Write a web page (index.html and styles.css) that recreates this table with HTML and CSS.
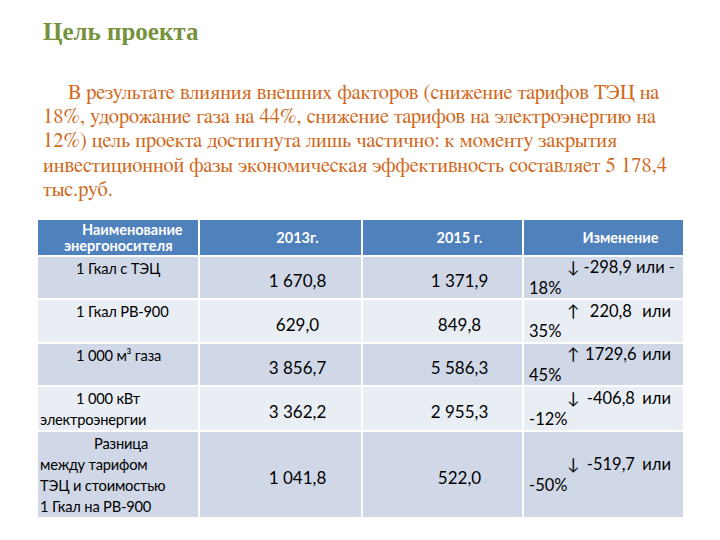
FILE: index.html
```html
<!DOCTYPE html>
<html>
<head>
<meta charset="utf-8">
<link rel="stylesheet" href="styles.css">
</head>
<body>
<div class="slide">
  <h1 class="title">Цель проекта</h1>
  <p class="lead">В результате влияния внешних факторов (снижение тарифов ТЭЦ на<br>18%, удорожание газа на 44%, снижение тарифов на электроэнергию на<br>12%) цель проекта достигнута лишь частично: к моменту закрытия<br>инвестиционной фазы экономическая эффективность составляет 5&nbsp;178,4<br>тыс.руб.</p>
  <table class="data">
    <colgroup>
      <col class="c1"><col class="c2"><col class="c3"><col class="c4">
    </colgroup>
    <thead>
      <tr class="hr">
        <th class="name"><span class="h1">Наименование</span><span class="h2">энергоносителя</span></th>
        <th>2013г.</th>
        <th>2015 г.</th>
        <th>Изменение</th>
      </tr>
    </thead>
    <tbody>
      <tr class="r1 odd">
        <td class="name">1 Гкал с ТЭЦ</td>
        <td class="num">1 670,8</td>
        <td class="num">1 371,9</td>
        <td class="chg"><span class="l1">↓ -298,9 или -</span><span class="l2">18%</span></td>
      </tr>
      <tr class="r2 even">
        <td class="name">1 Гкал РВ-900</td>
        <td class="num">629,0</td>
        <td class="num">849,8</td>
        <td class="chg"><span class="l1">↑ 220,8 или</span><span class="l2">35%</span></td>
      </tr>
      <tr class="r3 odd">
        <td class="name">1 000 м³ газа</td>
        <td class="num">3 856,7</td>
        <td class="num">5 586,3</td>
        <td class="chg"><span class="l1">↑ 1729,6 или</span><span class="l2">45%</span></td>
      </tr>
      <tr class="r4 even">
        <td class="name">1 000 кВт<br>электроэнергии</td>
        <td class="num">3 362,2</td>
        <td class="num">2 955,3</td>
        <td class="chg"><span class="l1">↓ -406,8 или</span><span class="l2">-12%</span></td>
      </tr>
      <tr class="r5 odd">
        <td class="name wide">Разница<br>между тарифом<br>ТЭЦ и стоимостью<br>1 Гкал на РВ-900</td>
        <td class="num">1 041,8</td>
        <td class="num">522,0</td>
        <td class="chg"><span class="l1">↓ -519,7 или</span><span class="l2">-50%</span></td>
      </tr>
    </tbody>
  </table>
</div>
</body>
</html>
```

FILE: styles.css
```css
html, body {
  margin: 0;
  padding: 0;
  background: #ffffff;
}

.slide {
  width: 720px;
  height: 540px;
  padding: 0 0 0 36px;
  box-sizing: border-box;
}

.title {
  margin: 0;
  padding: 18px 0 0 7px;
  font-family: "Liberation Serif", serif;
  font-weight: bold;
  font-size: 25px;
  line-height: 28px;
  color: #76923c;
}

.lead {
  margin: 35px 0 0 7px;
  width: 660px;
  font-family: FreeSerif, "Liberation Serif", serif;
  font-size: 20.5px;
  line-height: 24.2px;
  text-indent: 25px;
  color: #cf6a1e;
}

.data {
  margin-top: 16px;
  width: 647px;
  border-collapse: collapse;
  table-layout: fixed;
  font-family: Lato, "Noto Sans", sans-serif;
  font-size: 17px;
  color: #000;
}

.c1 { width: 162px; }
.c2 { width: 163px; }
.c3 { width: 161px; }
.c4 { width: 161px; }

.data th,
.data td {
  border: 2px solid #ffffff;
  padding: 0 4px;
}

.hr { height: 37px; }
.r1 { height: 43px; }
.r2 { height: 44px; }
.r3 { height: 43px; }
.r4 { height: 43px; }
.r5 { height: 87px; }

.data thead th {
  background: #4f81bd;
  color: #ffffff;
  font-size: 14.5px;
  font-weight: bold;
  line-height: 16px;
  text-align: center;
  vertical-align: middle;
  padding: 0 0 0 34px;
}

.data thead th.name {
  text-align: left;
  padding: 1px 0 0 0;
}

.h1 { display: block; padding-left: 44px; }
.h2 { display: block; padding-left: 26px; }

.odd td { background: #d0d8e8; }
.even td { background: #e9edf4; }

.data td.name {
  vertical-align: top;
  text-align: left;
  font-size: 14.7px;
  letter-spacing: -0.2px;
  line-height: 21px;
  text-indent: 36px;
  padding: 1px 2px 0 2px;
}

.data td.wide {
  text-indent: 54px;
}

.data td.num {
  text-align: center;
  vertical-align: middle;
  line-height: 21px;
  padding: 6px 0 0 34px;
}

.data td.chg {
  vertical-align: middle;
  font-size: 16.5px;
  line-height: 20.5px;
  padding: 0 12px 0 5px;
}

.chg .l1 {
  display: block;
  height: 20.5px;
  padding-left: 38px;
  white-space: nowrap;
  text-align: justify;
  text-align-last: justify;
}

.chg .l2 {
  display: block;
  height: 20.5px;
}
```
